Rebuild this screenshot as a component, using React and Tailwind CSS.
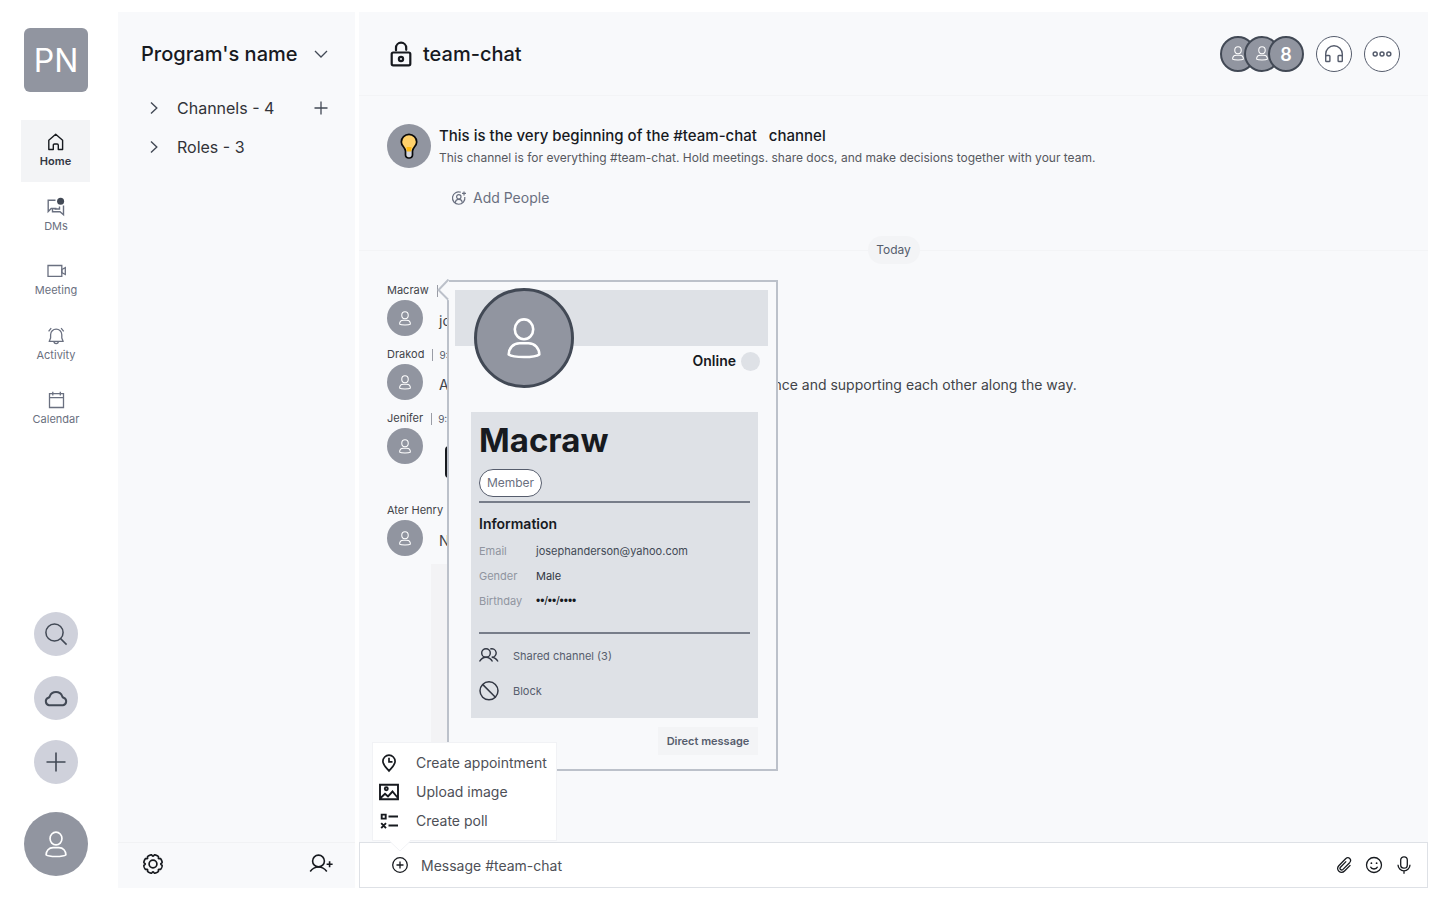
function PersonIcon({ className, strokeWidth = 2.6 }) {
  return (
    <svg viewBox="0 0 34 41" className={className} fill="none" stroke="currentColor" strokeWidth={strokeWidth} aria-hidden="true">
      <ellipse cx="17" cy="11.3" rx="9.2" ry="9.9" />
      <path d="M1.700 36.500C1.700 30.500 6 25.300 12.500 25.300H21.500C28 25.300 32.300 30.500 32.300 36.500C28 39.900 6 39.900 1.700 36.500Z" strokeLinejoin="round" />
    </svg>
  );
}

function Icon({ children, className, box = 24, strokeWidth = 1.5 }) {
  return (
    <svg
      viewBox={`0 0 ${box} ${box}`}
      className={className}
      fill="none"
      stroke="currentColor"
      strokeWidth={strokeWidth}
      aria-hidden="true"
    >
      {children}
    </svg>
  );
}

const icons = {
  home: (
    <Icon box={20} strokeWidth={1.4} className="size-5 text-[#171a1f]">
      <path d="M2.800 8.200 9.700 2.300l6.900 5.900v9.300h-4.300v-4.300a1.200 1.200 0 0 0-1.200-1.200H8.500a1.200 1.200 0 0 0-1.200 1.200v4.300H2.800Z" strokeLinejoin="round" />
    </Icon>
  ),
  dms: (
    <Icon box={20} strokeWidth={1.4} className="size-5">
      <path d="M9.500 3.300H2.200V14.500l3-3h5.300" />
      <path d="M6.500 12v2.700h7.500l3.500 3V8.500" />
      <path d="M8.500 12h5V9.500" />
      <circle cx="14.600" cy="4.300" r="3.500" fill="#424955" stroke="none" />
    </Icon>
  ),
  meeting: (
    <Icon box={20} strokeWidth={1.3} className="size-5">
      <path d="M2 4.500h13.800v10.800H2z" />
      <path d="M15.800 8.500 19.300 6.600v6.900l-3.500-2Z" />
    </Icon>
  ),
  activity: (
    <Icon box={20} strokeWidth={1.3} className="size-5">
      <path d="M3.200 15.400 4.600 12V8.700a5.600 5.600 0 0 1 11.200 0V12l1.400 3.400Z" strokeLinejoin="round" />
      <path d="M8 15.600c0 2.600 4.300 2.600 4.300 0M2.600 5.300 5.200 2.200M17.700 5.300l-2.600-3.100" />
    </Icon>
  ),
  calendar: (
    <Icon box={20} strokeWidth={1.3} className="size-5">
      <path d="M3.500 3.700h14v13.800h-14zM3.500 7.600h14M6.800 1.800v3.600M14.300 1.800v3.600" />
    </Icon>
  ),
};

const navItems = [
  { id: "home", label: "Home", active: true },
  { id: "dms", label: "DMs" },
  { id: "meeting", label: "Meeting" },
  { id: "activity", label: "Activity" },
  { id: "calendar", label: "Calendar" },
];

function Rail() {
  const round = "flex size-11 items-center justify-center rounded-full bg-[#cfd1db] text-[#424955]";
  return (
    <aside className="flex w-[118px] shrink-0 flex-col items-start pt-4 pb-3">
      <div className="ml-6 flex size-16 items-center justify-center rounded-md bg-[#9195a0] pt-0.5 text-[32px] text-white">PN</div>
      <nav className="mt-7 ml-[21px] flex h-80 flex-col justify-between">
        {navItems.map((item) => (
          <a
            key={item.id}
            href={`#${item.id}`}
            className={
              item.active
                ? "flex h-[62px] w-[69px] flex-col items-center bg-[#f3f4f6] pt-3 text-[11px] leading-[18px] font-semibold text-[#323743]"
                : "flex h-[62px] w-[70px] flex-col items-center pt-3 text-[11px] leading-[18px] text-[#6a7080]"
            }
          >
            {icons[item.id]}
            {item.label}
          </a>
        ))}
      </nav>
      <div className="mt-auto ml-6 flex w-16 flex-col items-center gap-5">
        <button className={round} aria-label="Search">
          <Icon className="size-6">
            <circle cx="10.500" cy="10.500" r="8.600" />
            <path d="m16.600 16.600 6 6" />
          </Icon>
        </button>
        <button className={round} aria-label="Cloud">
          <Icon className="size-6" strokeWidth={2}>
            <path d="M5 19.200a3.900 3.900 0 0 1-.6-7.500c.7-.2 1-.5 1.300-1.200a6.700 6.700 0 0 1 12.600 0c.3.700.600 1 1.300 1.200a3.900 3.900 0 0 1-.6 7.500Z" />
          </Icon>
        </button>
        <button className={round} aria-label="Add">
          <Icon className="size-6" strokeWidth={1.6}>
            <path d="M12 2.500v19M2.500 12h19" />
          </Icon>
        </button>
        <button className="mt-2 flex size-16 items-center justify-center rounded-full bg-[#9195a0] text-white" aria-label="My profile">
          <PersonIcon className="h-[27px] w-[22px]" />
        </button>
      </div>
    </aside>
  );
}

function gearPath() {
  const points = [];
  for (let i = 0; i < 192; i += 1) {
    const angle = (i / 192) * Math.PI * 2;
    const radius = 9.3 - 1.5 * Math.pow(Math.max(0, Math.cos(8 * angle)), 2);
    points.push(`${(12 + radius * Math.cos(angle)).toFixed(2)} ${(12 + radius * Math.sin(angle)).toFixed(2)}`);
  }
  return `M${points.join("L")}Z`;
}

function Sidebar() {
  return (
    <section className="flex w-[237px] shrink-0 flex-col bg-[#f8f9fb]">
      <button className="mt-7 flex h-7 items-center justify-between pr-[27px] pl-[23px] text-xl font-medium text-[#171a1f]">
        Program's name
        <Icon box={14} className="size-3.5 text-[#424955]" strokeWidth={1.3}>
          <path d="m1 4 6 6 6-6" />
        </Icon>
      </button>
      <ul className="mt-5 text-base text-[#323338]">
        {["Channels - 4", "Roles - 3"].map((label, index) => (
          <li key={label} className="flex h-[39px] items-center pr-[27px] pl-[29px]">
            <button className="flex flex-1 items-center gap-4">
              <Icon box={14} className="size-3.5 text-[#424955]" strokeWidth={1.4}>
                <path d="m4 1.500 5.800 5.500L4 12.500" />
              </Icon>
              {label}
            </button>
            {index === 0 && (
              <button aria-label="Add channel">
                <Icon box={14} className="size-3.5 text-[#424955]" strokeWidth={1.3}>
                  <path d="M7 .5v13M.5 7h13" />
                </Icon>
              </button>
            )}
          </li>
        ))}
      </ul>
      <div className="mt-auto flex h-[46px] items-center justify-between border-t border-[#f1f2f4] pr-[22px] pb-[3px] pl-[23px] text-[#171a1f]">
        <button aria-label="Settings">
          <Icon className="size-6" strokeWidth={1.7}>
            <path d={gearPath()} />
            <circle cx="12" cy="12" r="3.900" />
          </Icon>
        </button>
        <button aria-label="Invite people">
          <Icon className="size-6" strokeWidth={1.6}>
            <circle cx="9.500" cy="9" r="5.900" />
            <path d="M1.200 19.500c2-2.700 5-4.500 8.300-4.500s6.300 1.800 8.300 4.500M17.600 12.300h6M20.600 9.300v6" />
          </Icon>
        </button>
      </div>
    </section>
  );
}

function Header() {
  const action = "flex size-9 items-center justify-center rounded-full border border-[#565d6d] bg-white text-[#565d6d]";
  const member = "flex size-9 items-center justify-center rounded-full border-2 border-[#424955] bg-[#9195a0] text-white";
  return (
    <header className="flex h-[84px] shrink-0 items-center border-b border-[#f3f4f6] pr-7 pl-[29px]">
      <svg viewBox="0 0 26 28" className="h-7 w-[26px] text-[#171a1f]" fill="none" stroke="currentColor" strokeWidth="2.200" aria-hidden="true">
        <rect x="3.700" y="12.500" width="18.600" height="12.800" rx="1.500" />
        <path d="M8 10.300V7.800a5 5 0 0 1 10.200 0v2" strokeLinecap="round" />
        <circle cx="13" cy="19" r="2.100" />
      </svg>
      <h1 className="ml-[9px] text-xl font-medium text-[#171a1f]">team-chat</h1>
      <div className="ml-auto flex items-center gap-3">
        <div className="flex -space-x-3">
          <span className={member}><PersonIcon className="h-[15px] w-3" strokeWidth={3} /></span>
          <span className={member}><PersonIcon className="h-[15px] w-3" strokeWidth={3} /></span>
          <span className={member + " pt-0.5 text-lg font-semibold"}>8</span>
        </div>
        <button className={action} aria-label="Start a huddle">
          <Icon box={20} className="size-5" strokeWidth={1.4}>
            <path d="M1.700 12.500V10a8.300 8.300 0 0 1 16.600 0v2.500" />
            <rect x="1.700" y="11.500" width="4.200" height="6" rx=".8" />
            <rect x="14.100" y="11.500" width="4.200" height="6" rx=".8" />
          </Icon>
        </button>
        <button className={action} aria-label="More">
          <Icon box={20} className="size-5" strokeWidth={1.5}>
            <circle cx="3.200" cy="10" r="2" />
            <circle cx="10" cy="10" r="2" />
            <circle cx="16.800" cy="10" r="2" />
          </Icon>
        </button>
      </div>
    </header>
  );
}

function Intro() {
  return (
    <div className="flex gap-2 px-7 pt-7 pb-7">
      <div className="flex size-11 shrink-0 items-center justify-center rounded-full bg-[#9195a0]">
        <svg viewBox="0 0 18 26" className="h-[26px] w-[18px]" aria-hidden="true">
          <path d="M5.500 17.500h7v4.500a3 3 0 0 1-3 3h-1a3 3 0 0 1-3-3Z" fill="#d5d7dc" />
          <path d="M9 1.400A7.700 7.700 0 0 0 1.300 9c0 3.900 3.800 5.400 4.200 9h7c.4-3.600 4.200-5.100 4.200-9A7.700 7.700 0 0 0 9 1.400Z" fill="#ffd16b" />
          <path d="M6.500 14h5l-.5 4.500H7Z" fill="#fdb913" />
          <path d="M5.500 18v4a3 3 0 0 0 3 3h1a3 3 0 0 0 3-3v-4c.4-3.600 4.200-5.100 4.200-9A7.700 7.700 0 0 0 1.300 9c0 3.900 3.800 5.400 4.200 9Z" fill="none" stroke="#0a0a0a" strokeWidth="1.700" />
        </svg>
      </div>
      <div>
        <h2 className="text-[15px] leading-6 font-medium whitespace-pre text-[#171a1f]">This is the very beginning of the #team-chat   channel</h2>
        <p className="text-xs leading-5 text-[#56585e]">
          This channel is for everything #team-chat. Hold meetings. share docs, and make decisions together with your team.
        </p>
        <button className="mt-5 ml-3 flex h-5 items-center gap-1.5 text-sm text-[#6a7080]">
          <Icon box={16} className="size-4" strokeWidth={1.2}>
            <path d="M9.800 2.200A6.200 6.200 0 1 0 13.800 7" />
            <circle cx="7.800" cy="6.800" r="2.200" />
            <path d="M4.400 12.800c0-4.700 6.800-4.700 6.800 0M11 3.400h4M13 1.400v4" />
          </Icon>
          Add People
        </button>
      </div>
    </div>
  );
}

function Message({ name, time, children }) {
  return (
    <li>
      <div className="flex h-5 items-center gap-2 pt-0.5 text-[11px] text-[#424449]">
        {name}
        <span className="h-3 border-l border-[#9a9da6]" />
        <time className="-ml-0.5 text-[10px] text-[#565d6d]">{time}</time>
      </div>
      <div className="flex items-start gap-4">
        <span className="flex size-9 shrink-0 items-center justify-center rounded-full bg-[#9195a0] text-white">
          <PersonIcon className="h-[15px] w-3" strokeWidth={3} />
        </span>
        {children}
      </div>
    </li>
  );
}

function ProfileCard() {
  const details = [
    ["Email", "josephanderson@yahoo.com", "text-[#424955]"],
    ["Gender", "Male", "text-[#323743]"],
    ["Birthday", "••/••/••••", "font-['Liberation_Sans',sans-serif] text-xs leading-[25px] text-[#171a1f]"],
  ];
  return (
    <div className="absolute top-0 left-[88px] z-10 w-[331px] border-2 border-[#bcc1ca] bg-[#f8f9fb] px-1.5 pt-2 pb-3.5">
      <svg viewBox="0 0 12 22" className="absolute -top-[3px] -left-3 h-[22px] w-3" aria-hidden="true">
        <path d="M12 0 1.500 11 12 21.500Z" fill="#f8f9fb" />
        <path d="M11.500.5 1.500 11l9.500 9.500" fill="none" stroke="#bcc1ca" strokeWidth="2" />
      </svg>
      <div className="mr-0.5 h-14 bg-[#dee1e6] pl-[19px]">
        <div className="relative -top-0.5 flex size-[100px] items-center justify-center rounded-full border-3 border-[#424955] bg-[#9195a0] text-white">
          <PersonIcon className="h-[41px] w-[34px]" />
        </div>
      </div>
      <p className="mt-1 mr-2.5 flex h-[22px] items-center justify-end gap-[5px] text-sm font-semibold text-[#171a1f]">
        Online
        <span className="size-[19px] rounded-full bg-[#dee1e6]" />
      </p>
      <div className="mt-10 mr-3 ml-4 flex h-[306px] flex-col bg-[#dee1e6] px-2 pt-2">
        <h3 className="text-[33px] leading-10 font-bold text-[#171a1f]">Macraw</h3>
        <span className="mt-[9px] flex h-7 w-[63px] shrink-0 items-center justify-center rounded-full border border-[#565d6d] bg-white text-xs text-[#6a7080]">
          Member
        </span>
        <hr className="mt-1 border-t-2 border-[#777d89]" />
        <h4 className="mt-2.5 text-sm leading-[22px] font-semibold text-[#171a1f]">Information</h4>
        <dl className="mt-1 text-[11px] leading-[25px]">
          {details.map(([label, value, tone]) => (
            <div key={label} className="flex">
              <dt className="w-[57px] text-[#9095a0]">{label}</dt>
              <dd className={tone}>{value}</dd>
            </div>
          ))}
        </dl>
        <hr className="mt-[18px] border-t-2 border-[#777d89]" />
        <button className="mt-3 flex h-5 items-center gap-3.5 text-[11px] text-[#565d6d]">
          <Icon box={20} className="size-5 text-[#323743]" strokeWidth={1.4}>
            <circle cx="7" cy="7" r="4.300" />
            <path d="M.5 15.500c1.600-2.600 3.800-4.200 6.500-4.200s4.900 1.600 6.500 4.200M11.300 3a4.300 4.300 0 1 1 1.400 8.300c2.700 0 4.700 1.600 6.300 4.200" />
          </Icon>
          Shared channel (3)
        </button>
        <button className="mt-[15px] flex h-5 items-center gap-3.5 text-[11px] text-[#565d6d]">
          <Icon box={20} className="size-5 text-[#323743]" strokeWidth={1.5}>
            <circle cx="10" cy="9.800" r="9" />
            <path d="m3.600 3.400 12.800 12.800" />
          </Icon>
          Block
        </button>
      </div>
      <div className="mt-[9px] mr-3 flex justify-end">
        <button className="h-7 w-[100px] bg-[#f3f4f6] text-[11px] font-semibold text-[#565d6d]">Direct message</button>
      </div>
    </div>
  );
}

function Composer() {
  const menu = [
    [
      "Create appointment",
      <Icon key="a" box={20} className="size-5" strokeWidth={1.7}>
        <path d="M10 18c-3.200-3.900-6.100-6.200-6.100-9.700a6.100 6.100 0 0 1 12.200 0c0 3.500-2.900 5.800-6.100 9.700Z" />
        <path d="M10 4.800v4h3.500" />
      </Icon>,
    ],
    [
      "Upload image",
      <Icon key="u" box={20} className="size-5" strokeWidth={1.900}>
        <path d="M1 2.800h18v14.400H1zM1.500 16l4.500-4.300 3 2.800 4.500-5 5 6" />
        <circle cx="7.300" cy="6.800" r="1.500" />
      </Icon>,
    ],
    [
      "Create poll",
      <Icon key="p" box={20} className="size-5" strokeWidth={1.900}>
        <path d="M2.700 3.600h4v4h-4zM9.500 5.500H19M9.500 14.500H19M2.200 12.200l4.800 5M7 12.200l-4.800 5" />
      </Icon>,
    ],
  ];
  return (
    <form className="relative flex h-[46px] shrink-0 items-center border border-[#dee1e6] bg-white pr-3.5 pl-8 text-[#171a1f]">
      <ul className="absolute bottom-full left-3 z-20 mb-0.5 w-[185px] border border-[#f1f2f5] bg-white py-[5px]">
        {menu.map(([label, icon]) => (
          <li key={label}>
            <button type="button" className="flex h-[29px] items-center gap-[17px] pl-1.5 text-sm whitespace-nowrap text-[#171a1f]">
              {icon}
              <span className="text-[#4e5057]">{label}</span>
            </button>
          </li>
        ))}
      </ul>
      <svg viewBox="0 0 20 12" className="absolute -top-[3px] left-[30px] z-20 h-3 w-5" aria-hidden="true">
        <path d="M0 0h20v1.500L10 11 0 1.500Z" fill="#fff" />
        <path d="M0 1.500 10 11l10-9.500" fill="none" stroke="#f1f2f5" />
      </svg>
      <button type="button" aria-label="Add attachment">
        <Icon box={16} className="size-4" strokeWidth={1.3}>
          <circle cx="8" cy="8" r="7.300" />
          <path d="M8 4.500v7M4.500 8h7" />
        </Icon>
      </button>
      <input
        type="text"
        aria-label="Message"
        placeholder="Message #team-chat"
        className="ml-[13px] min-w-0 flex-1 pt-0.5 text-sm outline-none placeholder:text-[#4e5057]"
      />
      <div className="flex items-center gap-3">
        <button type="button" aria-label="Attach file">
          <Icon box={18} className="size-[18px]" strokeWidth={1.3}>
            <path d="m16.200 9.300-5.600 5.600c-4 4-9.700-.8-6-5l6.800-7c3-2.700 6.700.8 4 4l-6.600 6.700c-1.700 1.600-4-.4-2.500-2.200l5.700-5.800" transform="translate(-.8 -.2)" />
          </Icon>
        </button>
        <button type="button" aria-label="Emoji">
          <Icon box={18} className="size-[18px]" strokeWidth={1.3}>
            <circle cx="9" cy="9" r="7.500" />
            <path d="M5.400 10.800c1.300 2.900 5.900 2.900 7.200 0" />
            <circle cx="6.400" cy="7.200" r=".9" fill="currentColor" stroke="none" />
            <circle cx="11.600" cy="7.200" r=".9" fill="currentColor" stroke="none" />
          </Icon>
        </button>
        <button type="button" aria-label="Record voice">
          <Icon box={18} className="size-[18px]" strokeWidth={1.3}>
            <rect x="5.700" y=".8" width="6.600" height="11.400" rx="3.200" />
            <path d="M3 8.800a6 6 0 0 0 12 0M9 14.800v3" />
          </Icon>
        </button>
      </div>
    </form>
  );
}

export default function App() {
  return (
    <div className="flex h-screen bg-white py-3 pr-3 font-['Inter',sans-serif]">
      <Rail />
      <Sidebar />
      <main className="ml-1 flex min-w-0 flex-1 flex-col bg-[#f8f9fb]">
        <Header />
        <div className="min-h-0 flex-1 overflow-y-auto">
          <Intro />
          <div className="flex h-7 items-center">
            <span className="h-px flex-1 bg-[#f3f4f6]" />
            <span className="flex h-7 w-[52px] items-center justify-center rounded-full bg-[#f3f4f6] text-xs text-[#565d6d]">Today</span>
            <span className="h-px flex-1 bg-[#f3f4f6]" />
          </div>
          <div className="relative mt-4">
            <ul className="flex flex-col gap-2 px-7 text-sm text-[#424449]">
              <Message name="Macraw" time="9:00 AM">
                <p className="mt-[11px] leading-5">joined the team-chat.</p>
              </Message>
              <Message name="Drakod" time="9:15 AM">
                <p className="mt-[11px] leading-5">
                  All of the team today look forward to sharing guidance and supporting each other along the way.
                </p>
              </Message>
              <Message name="Jenifer" time="9:30 AM">
                <div className="h-16 pt-[18px] pl-1.5">
                  <div className="h-8 w-48 rounded-sm bg-[#171a1f]" />
                </div>
              </Message>
              <Message name="Ater Henry" time="9:45 AM">
                <p className="mt-[11px] leading-5">Nice!</p>
              </Message>
              <li className="ml-11 h-[200px] w-[300px] bg-[#f3f3f5]" />
            </ul>
            <ProfileCard />
          </div>
        </div>
        <Composer />
      </main>
    </div>
  );
}
